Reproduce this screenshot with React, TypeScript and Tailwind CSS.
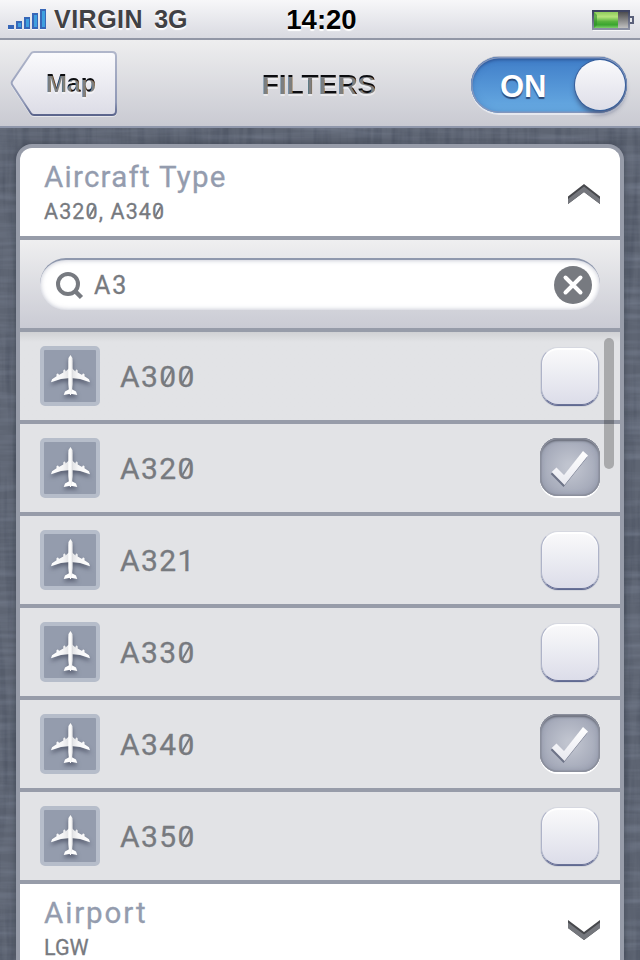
import React from "react";

const ROWS = [
  { name: "A300", checked: false },
  { name: "A320", checked: true },
  { name: "A321", checked: false },
  { name: "A330", checked: false },
  { name: "A340", checked: true },
  { name: "A350", checked: false },
];

function Linen() {
  return (
    <svg className="absolute inset-0" width="640" height="960" aria-hidden="true">
      <defs>
        <filter id="warp" x="0" y="0" width="100%" height="100%" colorInterpolationFilters="sRGB">
          <feTurbulence type="fractalNoise" baseFrequency="0.13 0.01" numOctaves="3" seed="4" />
          <feColorMatrix values="0 0 0 0 0.15  0 0 0 0 0.18  0 0 0 0 0.25  0.55 0 0 0 -0.22" />
        </filter>
        <filter id="weft" x="0" y="0" width="100%" height="100%" colorInterpolationFilters="sRGB">
          <feTurbulence type="fractalNoise" baseFrequency="0.01 0.13" numOctaves="3" seed="9" />
          <feColorMatrix values="0 0 0 0 0.6  0 0 0 0 0.64  0 0 0 0 0.72  0.6 0 0 0 -0.24" />
        </filter>
      </defs>
      <rect width="640" height="960" fill="#5e6573" />
      <rect width="640" height="960" filter="url(#warp)" />
      <rect width="640" height="960" filter="url(#weft)" />
    </svg>
  );
}

function SignalBars() {
  return (
    <svg width="40" height="22" viewBox="0 0 40 22" className="mt-[2px]">
      {[4, 8, 12, 16, 20].map((h, i) => (
        <g key={h}>
          <rect x={i * 8} y={20 - h} width="6" height={h} fill="#3767b8" />
          {h > 4 && <rect x={i * 8 + 2} y={22 - h} width="3" height={h - 4} fill="#3f9fdf" />}
          <rect x={i * 8} y="20" width="6" height="1" fill="#fff" opacity=".7" />
        </g>
      ))}
    </svg>
  );
}

function Battery() {
  return (
    <svg width="43" height="21" viewBox="0 0 43 21" className="mt-[2px]">
      <defs>
        <linearGradient id="charge" x1="0" y1="0" x2="0" y2="1">
          <stop offset="0" stopColor="#8fcb5c" />
          <stop offset=".3" stopColor="#b5e37c" />
          <stop offset=".6" stopColor="#55b23c" />
          <stop offset=".8" stopColor="#3aa52f" />
          <stop offset="1" stopColor="#7ecf6c" />
        </linearGradient>
        <linearGradient id="empty" x1="0" y1="0" x2="0" y2="1">
          <stop offset="0" stopColor="#4c4c4e" />
          <stop offset="1" stopColor="#c0c0c0" />
        </linearGradient>
        <linearGradient id="shell" x1="0" y1="0" x2="0" y2="1">
          <stop offset="0" stopColor="#3c4260" />
          <stop offset="1" stopColor="#8a90a3" />
        </linearGradient>
      </defs>
      <rect x="1" y="19.500" width="37" height="1.500" fill="#fff" opacity=".7" />
      <rect x="1" y="1" width="36" height="18" fill="#fff" stroke="url(#shell)" strokeWidth="2" />
      <rect x="2" y="2" width="24" height="16" fill="url(#charge)" />
      <path d="M2 2l3 3v10l-3 3z" fill="#2f8f2a" opacity=".6" />
      <rect x="26" y="2" width="10" height="16" fill="url(#empty)" />
      <path d="M38 7h3v6h-3" fill="#e8e9ed" stroke="#5a607a" strokeWidth="2" />
    </svg>
  );
}

function Inset({ children }: { children: React.ReactNode }) {
  return (
    <span className="bg-[#0c0d10] bg-clip-text text-transparent [text-shadow:0_2px_0_rgba(255,255,255,0.47)]">
      {children}
    </span>
  );
}

/* Label text whose zeros carry a diagonal slash. */
function Slashed({ text }: { text: string }) {
  return (
    <>
      {text.split("").map((ch, i) =>
        ch === "0" ? (
          <span key={i} className="relative">
            0
            <i className="absolute left-[0.245em] top-[0.33em] h-[0.52em] w-[0.07em] rotate-[30deg] bg-[#777a7f]" />
          </span>
        ) : (
          <React.Fragment key={i}>{ch}</React.Fragment>
        ),
      )}
    </>
  );
}

function BackButton() {
  return (
    <button className="relative mt-px h-[68px] w-[110px]">
      <svg className="absolute inset-0" width="110" height="68" viewBox="0 0 110 68">
        <defs>
          <linearGradient id="backFill" x1="0" y1="0" x2="0" y2="1">
            <stop offset="0" stopColor="#fbfbfd" />
            <stop offset="1" stopColor="#dcdce6" />
          </linearGradient>
          <linearGradient id="backLine" x1="0" y1="0" x2="0" y2="1">
            <stop offset="0" stopColor="#b0b6ca" />
            <stop offset=".8" stopColor="#8f98b6" />
            <stop offset="1" stopColor="#5b658c" />
          </linearGradient>
        </defs>
        <path
          d="M24 2H102Q106 2 106 6V61Q106 65 102 65H24Q22 65 21 63.500L2.300 35Q1 33 2.300 31L21 3.500Q22 2 24 2Z"
          fill="none"
          stroke="#fff"
          strokeOpacity=".5"
          strokeWidth="2"
          transform="translate(0 1)"
        />
        <path
          d="M24 2H102Q106 2 106 6V61Q106 65 102 65H24Q22 65 21 63.500L2.300 35Q1 33 2.300 31L21 3.500Q22 2 24 2Z"
          fill="url(#backFill)"
          stroke="url(#backLine)"
          strokeWidth="2"
        />
      </svg>
      <span className="relative ml-[12px] block pb-px text-center font-['Liberation_Sans',sans-serif] text-[25px] font-bold leading-none">
        <Inset>Map</Inset>
      </span>
    </button>
  );
}

function Toggle() {
  return (
    <div className="mt-[3px] flex h-[56px] w-[156px] items-center justify-between rounded-full bg-linear-to-b from-[#3f7dc8] to-[#69ace3] pl-[29px] pr-[2px] shadow-[inset_0_0_0_1.500px_#8296bd,inset_0_3px_3px_#2f589a,inset_0_0_7px_rgba(40,90,160,0.5),0_2px_0_#e6e8ee,0_-1px_0_#b5bac8]">
      <span className="mt-[3px] font-['Liberation_Sans',sans-serif] text-[31px] font-bold leading-none text-white [text-shadow:0_2px_1px_#2c4a78]">
        ON
      </span>
      <span className="size-[50px] rounded-full bg-linear-to-b from-[#fafafc] to-[#dedee8] shadow-[0_0_0_1px_#3a5f9a,0_4px_5px_rgba(40,50,90,0.6)]" />
    </div>
  );
}

function Chevron({ down = false }: { down?: boolean }) {
  const id = down ? "chevDown" : "chevUp";
  const shape = down ? "M0 0L16 12L32 0V8L16 20L0 8Z" : "M0 12.500L16 0L32 12.500V20L16 8L0 20Z";
  return (
    <svg width="32" height="21" viewBox="0 0 32 21" className="mt-[4px]">
      <defs>
        <clipPath id={id}>
          <path d={shape} />
        </clipPath>
      </defs>
      <path d={shape} fill="#47484c" />
      <g clipPath={`url(#${id})`}>
        <path d={shape} fill="#75777d" transform="translate(0 2.500)" />
      </g>
    </svg>
  );
}

function Plane() {
  return (
    <svg width="52" height="52" viewBox="0 0 52 52" className="drop-shadow-[0_3px_2px_rgba(50,55,75,0.6)]">
      <defs>
        <linearGradient id="hull" x1="0" y1="0" x2="1" y2="0">
          <stop offset="0" stopColor="#ffffff" />
          <stop offset=".6" stopColor="#fafafa" />
          <stop offset="1" stopColor="#d8d9dc" />
        </linearGradient>
        <linearGradient id="wing" x1="0" y1="0" x2="1" y2="0">
          <stop offset="0" stopColor="#fff" />
          <stop offset=".3" stopColor="#f6f6f7" />
          <stop offset=".5" stopColor="#dcdde0" />
          <stop offset=".7" stopColor="#f6f6f7" />
          <stop offset="1" stopColor="#fff" />
        </linearGradient>
      </defs>
      <path
        d="M26.500 17L21.500 21.500V20.500Q20.500 18.500 19.300 20.500V22.500L14.800 25V24.300Q13.700 22.500 12.500 24.300V26.300L8 29.200L7 32.300L17 29L26.500 28L36 29L46 32.300L45 29.200L40.500 26.300V24.300Q39.300 22.500 38.200 24.300V25L33.700 22.500V20.500Q32.500 18.500 31.500 20.500V21.500Z"
        fill="url(#wing)"
      />
      <path d="M25.500 39L21 41.500L19.700 45L26.500 43.700L33.300 45L32 41.500L27.500 39Z" fill="#fff" />
      <path d="M26.500 5Q28.700 7 28.700 11V34Q28.400 40 27 45H26Q24.600 40 24.300 34V11Q24.300 7 26.500 5Z" fill="url(#hull)" />
    </svg>
  );
}

function Checkbox({ checked }: { checked: boolean }) {
  if (!checked) {
    return (
      <span className="mr-px size-[58px] rounded-[17px] border border-t-[#d6d8e0] border-x-[#aeb3c8] border-b-[#6a7298] bg-linear-to-b from-[#fafafb] to-[#dcdde9] shadow-[0_1px_1px_#525c88,inset_0_2px_1px_#fff]" />
    );
  }
  return (
    <span className="mb-[2px] flex h-[58px] w-[60px] items-center justify-center rounded-[18px] bg-[radial-gradient(circle_at_50%_50%,#c0c4cf_10%,#a2a7b7_75%)] shadow-[inset_0_0_0_1.500px_#8b8f9c,inset_0_3px_2px_#666a76,inset_0_0_6px_#868c9e,0_2px_0_#fff]">
      <svg width="40" height="40" viewBox="0 0 40 40" className="mt-[2px] drop-shadow-[-1px_2px_0.500px_#6d7387]">
        <defs>
          <linearGradient id="tick" x1="0" y1="0" x2="0" y2="1">
            <stop offset="0" stopColor="#fff" />
            <stop offset="1" stopColor="#e8e9f0" />
          </linearGradient>
        </defs>
        <path d="M1.700 24L6.500 19.500L14 27L33 3L38 7.500L14.500 37Z" fill="url(#tick)" />
      </svg>
    </span>
  );
}

export default function App() {
  return (
    <div className="relative h-[960px] w-[640px] overflow-hidden font-[Roboto,sans-serif]">
      <Linen />
      <div className="relative flex h-full flex-col">
        <header className="flex h-[40px] shrink-0 items-center border-b-2 border-[#9297a6] bg-linear-to-b from-[#f7f7f9] to-[#d9dae1] font-['Liberation_Sans',sans-serif] font-bold">
          <div className="flex flex-1 items-center pl-[8px] text-[25px] leading-none text-[#414144] [text-shadow:0_2px_1px_#fff]">
            <SignalBars />
            <span className="ml-[6px] tracking-[0.500px]">VIRGIN</span>
            <span className="ml-[11px]">3G</span>
          </div>
          <div className="mt-[2px] text-[27.500px] leading-none text-black [text-shadow:0_2px_1px_#fff]">14:20</div>
          <div className="flex flex-1 justify-end pr-[5px]">
            <Battery />
          </div>
        </header>

        <nav className="flex h-[88px] shrink-0 items-center justify-between border-b-2 border-[#8f97ab] bg-linear-to-b from-[#eeeeef] to-[#c9cad2] pl-[10px] pr-[13px]">
          <BackButton />
          <h1 className="ml-[47px] mt-[4px] font-['Liberation_Sans',sans-serif] text-[28px] font-bold leading-none">
            <Inset>FILTERS</Inset>
          </h1>
          <Toggle />
        </nav>

        <main className="mx-4 mt-4 flex-1 overflow-hidden rounded-t-[16px] border-x-4 border-t-4 border-[#979ca9] bg-white shadow-[0_0_6px_rgba(40,45,60,0.5)]">
          <section className="flex h-[92px] items-center justify-between border-b-4 border-[#979ca9] pl-[24px] pr-[20px]">
            <div className="pt-[2px]">
              <h2 className="text-[29.500px] leading-[34px] tracking-[1.250px] text-[#949cae] [-webkit-text-stroke:0.3px_#949cae]">
                Aircraft Type
              </h2>
              <p className="mt-[4px] text-[21.500px] leading-[28px] tracking-[1.100px] text-[#777a7f] [-webkit-text-stroke:0.3px_#777a7f]">
                <Slashed text="A320, A340" />
              </p>
            </div>
            <Chevron />
          </section>

          <div className="h-[92px] border-b-4 border-[#979ca9] bg-linear-to-b from-[#efeff0] to-[#cacbd4] px-[20px] pt-[18px]">
            <div className="flex h-[52px] items-center rounded-full border-t-2 border-[#8f98ad] bg-white pl-[15px] pr-[8px] shadow-[inset_0_0_5px_rgba(130,135,160,0.55)]">
              <svg width="29" height="29" viewBox="0 0 29 29" fill="none" stroke="#777a80" strokeWidth="4">
                <circle cx="13" cy="13" r="10" />
                <path d="M20 20L26.500 26.500" strokeWidth="4.500" />
              </svg>
              <span className="ml-[10px] flex-1 text-[25px] leading-none tracking-[2px] text-[#777a7f] [-webkit-text-stroke:0.3px_#777a7f]">
                A3
              </span>
              <svg width="38" height="38" viewBox="0 0 38 38">
                <circle cx="19" cy="19" r="19" fill="#777a80" />
                <path d="M11.500 11.500L26.500 26.500M26.500 11.500L11.500 26.500" stroke="#fff" strokeWidth="4" strokeLinecap="round" />
              </svg>
            </div>
          </div>

          <ul className="relative">
            {ROWS.map((row, i) => (
              <li
                key={row.name}
                className={`flex h-[92px] items-center border-b-4 border-[#979ca9] px-[20px] ${i === 0 ? "bg-linear-to-b from-[#d0d1d4] to-[#e2e3e6] to-[10px]" : "bg-[#e2e3e6]"}`}
              >
                <span className="flex size-[60px] items-center justify-center rounded-[5px] border-4 border-[#b6bdca] bg-[#949cad]">
                  <Plane />
                </span>
                <span className="ml-[20px] mt-[2px] flex-1 text-[30px] leading-none tracking-[1.400px] text-[#777a7f] [-webkit-text-stroke:0.3px_#777a7f]">
                  <Slashed text={row.name} />
                </span>
                <Checkbox checked={row.checked} />
              </li>
            ))}
            <li className="absolute right-[6px] top-[6px] h-[131px] w-[10px] rounded-full bg-black/25" />
          </ul>

          <section className="flex h-[88px] items-center justify-between pl-[24px] pr-[20px]">
            <div className="pt-[2px]">
              <h2 className="text-[29.500px] leading-[34px] tracking-[1.900px] text-[#949cae] [-webkit-text-stroke:0.3px_#949cae]">
                Airport
              </h2>
              <p className="mt-[4px] text-[21.500px] leading-[28px] text-[#777a7f] [-webkit-text-stroke:0.3px_#777a7f]">LGW</p>
            </div>
            <Chevron down />
          </section>
        </main>
      </div>
    </div>
  );
}
